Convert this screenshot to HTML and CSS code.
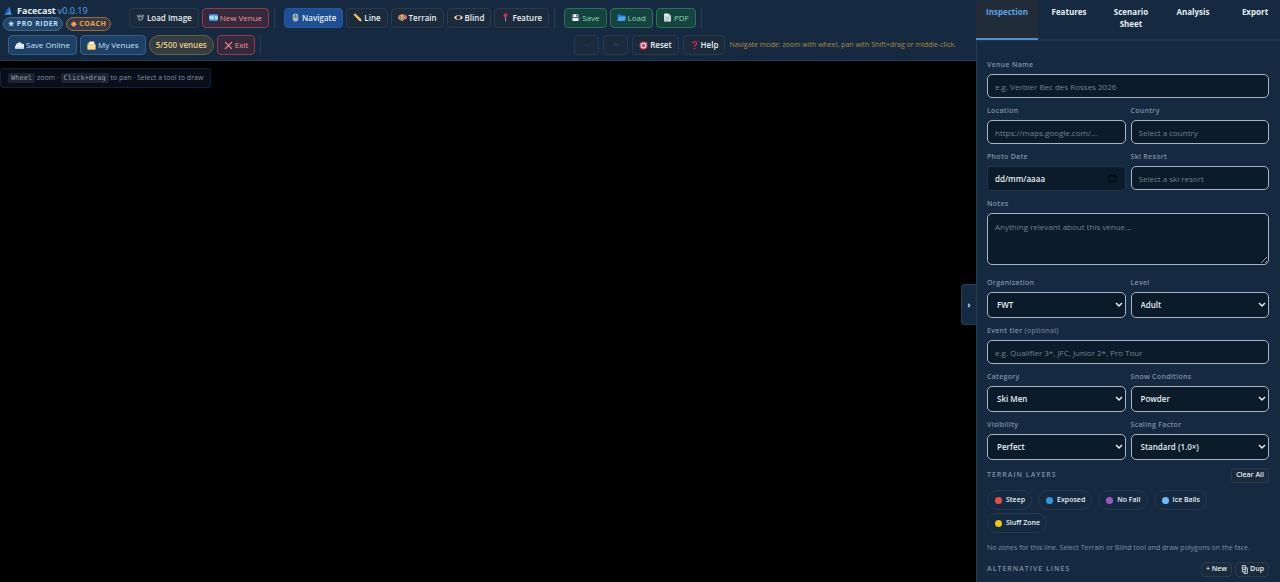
FILE: index.html
```html
<!DOCTYPE html>
<html lang="en">
<head>
    <meta charset="UTF-8">
    <meta name="viewport" content="width=device-width, initial-scale=1.0">
    <title>Facecast</title>
    <link rel="stylesheet" href="styles.css">
</head>
<body>
    <div class="app">
        <main class="workspace">
            <header class="toolbar">
                <div class="toolbar-row">
                    <div class="brand">
                        <div class="brand-name">
                            <svg class="logo" viewBox="0 0 16 16"><path d="M2 14 10 1l4 13-5-3z" fill="#2f9be8"/><path d="M2 14 10 1 9 11z" fill="#1763b5"/><path d="m2 14 7-3 5 3-5-1z" fill="#8fd0ff"/></svg>
                            <strong>Facecast</strong>
                            <span class="version">v0.0.19</span>
                        </div>
                        <div class="badges">
                            <span class="badge badge-pro">★ PRO RIDER</span>
                            <span class="badge badge-coach">◆ COACH</span>
                        </div>
                    </div>
                    <div class="group group-venue">
                        <button class="btn">
                            <svg class="icon" viewBox="0 0 16 16"><path d="m1 3 4 1 2-2 3 2 5-2-3 11-7 1z" fill="#60717f"/><path d="m3 4 4 5 6-5" fill="none" stroke="#b4c2cc"/><circle cx="8" cy="9" r="3" fill="#293743" stroke="#97a8b4"/></svg>
                            Load Image
                        </button>
                        <button class="btn btn-red">
                            <svg class="icon" viewBox="0 0 16 16"><rect y="2" width="16" height="12" rx="2" fill="#2d9be9"/><path d="M2 11V5l3 6V5m4 0H7v6h2M7 8h2m2-3 1 6 1-4 1 4 1-6" fill="none" stroke="#fff" stroke-width="1.3"/></svg>
                            New Venue
                        </button>
                    </div>
                    <div class="group group-tools">
                        <button class="btn btn-active">
                            <svg class="icon" viewBox="0 0 16 16"><rect x="3" y="1" width="10" height="14" rx="5" fill="#a9b7c2"/><path d="M3 7h10M8 1v6" stroke="#5a6b79"/><rect x="7" y="3" width="2" height="4" rx="1" fill="#596875"/></svg>
                            Navigate
                        </button>
                        <button class="btn">
                            <svg class="icon" viewBox="0 0 16 16"><path d="m1 3 3-2 10 9 1 5-5-2z" fill="#f5c73d"/><path d="m1 3 3-2 2 2-3 2z" fill="#f29393"/><path d="m14 10 1 5-5-2z" fill="#f1d8b0"/></svg>
                            Line
                        </button>
                        <button class="btn">
                            <svg class="icon" viewBox="0 0 16 16"><path d="M8 2c5 0 8 3 8 6s-3 3-5 3 0 4-4 3-7-3-7-6 3-6 8-6z" fill="#d98d67"/><circle cx="4" cy="7" r="1.5" fill="#3f85cf"/><circle cx="7" cy="5" r="1.5" fill="#efe07a"/><circle cx="11" cy="5" r="1.5" fill="#cf3d43"/><circle cx="5" cy="11" r="1.5" fill="#5eae57"/><circle cx="13" cy="8" r="1" fill="#75458b"/></svg>
                            Terrain
                        </button>
                        <button class="btn">
                            <svg class="icon" viewBox="0 0 16 16"><path d="M0 8c4-6 12-6 16 0-4 6-12 6-16 0z" fill="#f2efe6"/><circle cx="8" cy="8" r="4" fill="#54402f"/><circle cx="8" cy="8" r="2" fill="#101010"/></svg>
                            Blind
                        </button>
                        <button class="btn">
                            <svg class="icon" viewBox="0 0 16 16"><path d="M8 6v9" stroke="#9ba8b2" stroke-width="1.5"/><circle cx="8" cy="4" r="3.5" fill="#dc2748"/></svg>
                            Feature
                        </button>
                    </div>
                    <div class="group group-files">
                        <button class="btn btn-green">
                            <svg class="icon" viewBox="0 0 16 16"><path d="M1 2h12l2 2v10H1z" fill="#53687a"/><path d="M4 2h8v5H4zM3 9h10v5H3z" fill="#f1f4f6"/><path d="M9 3h2v3H9z" fill="#32485b"/></svg>
                            Save
                        </button>
                        <button class="btn btn-green">
                            <svg class="icon" viewBox="0 0 16 16"><path d="M1 2h5l2 2h6v10H1z" fill="#1873bd"/><path d="M3 6h13l-2 8H1z" fill="#42a5ee"/></svg>
                            Load
                        </button>
                        <button class="btn btn-green">
                            <svg class="icon" viewBox="0 0 16 16"><path d="M2 1h8l4 4v10H2z" fill="#e8edf0"/><path d="M10 1v4h4M4 7h8M4 9h8M4 11h8M4 13h5" fill="none" stroke="#8597a2"/></svg>
                            PDF
                        </button>
                    </div>
                </div>
                <div class="toolbar-row toolbar-row-second">
                    <div class="group group-online">
                        <button class="btn btn-blue">
                            <svg class="icon" viewBox="0 0 16 16"><path d="M3 14a3 3 0 0 1-1-6 3 3 0 0 1 3-4 4 4 0 0 1 7 1 4 4 0 0 1 2 9z" fill="#e6edf2"/><path d="M3 14a3 3 0 0 1-2-4c3 2 9 2 14 0 0 2-1 4-2 4z" fill="#b9cbd8"/></svg>
                            Save Online
                        </button>
                        <button class="btn btn-blue">
                            <svg class="icon" viewBox="0 0 16 16"><path d="M1 3h5l1 2h8v10H1z" fill="#e2b84f"/><path d="M4 1h9v5H4z" fill="#f3f3ed"/><path d="M1 7h14v8H1z" fill="#fbdc8b"/></svg>
                            My Venues
                        </button>
                        <span class="venue-count">5/500 venues</span>
                        <button class="btn btn-red">
                            <svg class="icon" viewBox="0 0 16 16"><path d="m2 2 12 12M14 2 2 14" stroke="#ff8f91" stroke-width="2"/></svg>
                            Exit
                        </button>
                    </div>
                    <div class="group group-view">
                        <button class="btn btn-zoom" disabled>−</button>
                        <button class="btn btn-zoom" disabled>+</button>
                        <button class="btn">
                            <svg class="icon" viewBox="0 0 16 16"><circle cx="8" cy="8" r="7" fill="#e8405a"/><circle cx="8" cy="8" r="5" fill="#f5e6e9"/><circle cx="8" cy="8" r="3" fill="#df304d"/><path d="m8 8 5-6 2 1-2 2z" fill="#69b9e5"/></svg>
                            Reset
                        </button>
                        <button class="btn">
                            <svg class="icon" viewBox="0 0 16 16"><path d="M5 5c0-5 7-5 7-1 0 3-4 3-4 6" fill="none" stroke="#d5234f" stroke-width="2.5"/><circle cx="8" cy="13.5" r="1.6" fill="#d5234f"/></svg>
                            Help
                        </button>
                        <span class="mode-hint">Navigate mode: zoom with wheel, pan with Shift+drag or middle-click.</span>
                    </div>
                </div>
            </header>
            <section class="canvas-area">
                <div class="canvas-hint"><kbd>Wheel</kbd> zoom · <kbd>Click+drag</kbd> to pan · Select a tool to draw</div>
                <button class="panel-toggle" aria-label="Collapse panel">›</button>
            </section>
        </main>

        <aside class="panel">
            <nav class="tabs">
                <button class="tab tab-active">Inspection</button>
                <button class="tab">Features</button>
                <button class="tab">Scenario Sheet</button>
                <button class="tab">Analysis</button>
                <button class="tab">Export</button>
            </nav>
            <form class="panel-body">
                <div class="field">
                    <label for="venue-name">Venue Name</label>
                    <input type="text" id="venue-name" placeholder="e.g. Verbier Bec des Rosses 2026">
                </div>
                <div class="field-row">
                    <div class="field">
                        <label for="location">Location</label>
                        <input type="text" id="location" placeholder="https://maps.google.com/...">
                    </div>
                    <div class="field">
                        <label for="country">Country</label>
                        <input type="text" id="country" placeholder="Select a country">
                    </div>
                </div>
                <div class="field-row">
                    <div class="field">
                        <label for="photo-date">Photo Date</label>
                        <div class="date-box">
                            <input type="text" id="photo-date" placeholder="dd/mm/aaaa">
                            <svg class="icon" viewBox="0 0 16 16"><path d="M2 3h12v11H2zM2 4h12M5 1v2m6-2v2" fill="none" stroke="#03080d" stroke-width="2"/></svg>
                        </div>
                    </div>
                    <div class="field">
                        <label for="resort">Ski Resort</label>
                        <input type="text" id="resort" placeholder="Select a ski resort">
                    </div>
                </div>
                <div class="field field-notes">
                    <label for="notes">Notes</label>
                    <textarea id="notes" placeholder="Anything relevant about this venue..."></textarea>
                </div>
                <div class="field-row">
                    <div class="field">
                        <label for="organization">Organization</label>
                        <select id="organization"><option>FWT</option></select>
                    </div>
                    <div class="field">
                        <label for="level">Level</label>
                        <select id="level"><option>Adult</option></select>
                    </div>
                </div>
                <div class="field">
                    <label for="tier">Event tier <span class="optional">(optional)</span></label>
                    <input type="text" id="tier" placeholder="e.g. Qualifier 3*, JFC, Junior 2*, Pro Tour">
                </div>
                <div class="field-row">
                    <div class="field">
                        <label for="category">Category</label>
                        <select id="category"><option>Ski Men</option></select>
                    </div>
                    <div class="field">
                        <label for="snow">Snow Conditions</label>
                        <select id="snow"><option>Powder</option></select>
                    </div>
                </div>
                <div class="field-row">
                    <div class="field">
                        <label for="visibility">Visibility</label>
                        <select id="visibility"><option>Perfect</option></select>
                    </div>
                    <div class="field">
                        <label for="scaling">Scaling Factor</label>
                        <select id="scaling"><option>Standard (1.0×)</option></select>
                    </div>
                </div>

                <div class="section-head">
                    <h2>Terrain Layers</h2>
                    <button type="button" class="btn-small">Clear All</button>
                </div>
                <div class="chips">
                    <button type="button" class="chip steep">Steep</button>
                    <button type="button" class="chip exposed">Exposed</button>
                    <button type="button" class="chip no-fall">No Fall</button>
                    <button type="button" class="chip ice">Ice Balls</button>
                    <button type="button" class="chip sluff">Sluff Zone</button>
                </div>
                <p class="empty-note">No zones for this line. Select Terrain or Blind tool and draw polygons on the face.</p>

                <div class="section-head">
                    <h2>Alternative Lines</h2>
                    <button type="button" class="btn-small">+ New</button>
                    <button type="button" class="btn-small">
                        <svg class="icon" viewBox="0 0 16 16"><path d="M4 1h6v11H4zM7 12v3h6V5h-3M5 5h4M5 8h4" fill="none" stroke="#e6edf3" stroke-width="1.5"/></svg>
                        Dup
                    </button>
                </div>
            </form>
        </aside>
    </div>
</body>
</html>
```
FILE: styles.css
```css
* {
    margin: 0;
    padding: 0;
    box-sizing: border-box;
}

body {
    background: #000;
    color: #e6edf3;
    font-family: 'Open Sans', 'Noto Sans', sans-serif;
    font-size: 8px;
    line-height: 12px;
    overflow: hidden;
}

button,
input,
select,
textarea {
    font: inherit;
    color: inherit;
}

button {
    cursor: pointer;
}

.app {
    display: flex;
    height: 100vh;
}

.workspace {
    flex: 1;
    min-width: 0;
    display: flex;
    flex-direction: column;
}

/* Toolbar */
.toolbar {
    display: flex;
    flex-direction: column;
    gap: 4px;
    padding: 4px 8px 5px 3px;
    background: #152a40;
    border-bottom: 1px solid #263c52;
}

.toolbar-row {
    display: flex;
    align-items: center;
    gap: 9px;
}

.toolbar-row-second {
    padding-left: 5px;
    padding-right: 12px;
}

.brand {
    width: 117px;
}

.brand-name {
    display: flex;
    align-items: center;
    gap: 4px;
    font-size: 9px;
    line-height: 13px;
}

.logo {
    width: 10px;
    height: 10px;
}

.version {
    color: #5aa5e6;
    margin-left: -2px;
}

.badges {
    display: flex;
    gap: 3px;
}

.badge {
    border: 1px solid #41678b;
    border-radius: 8px;
    padding: 0 4px;
    font-size: 7px;
    font-weight: 700;
    letter-spacing: 0.5px;
    background: #234669;
    color: #b9dcf9;
    white-space: nowrap;
}

.badge-coach {
    border-color: #986d43;
    background: #393b40;
    color: #eda45c;
}

.group {
    display: flex;
    align-items: center;
    gap: 3px;
    padding-right: 5px;
    border-right: 1px solid #263d55;
}

.btn {
    display: flex;
    align-items: center;
    justify-content: center;
    gap: 2px;
    height: 20px;
    padding: 0 6px;
    border: 1px solid #293b4e;
    border-radius: 4px;
    background: #1b2b3c;
    font-weight: 600;
    white-space: nowrap;
}

.icon {
    width: 9px;
    height: 9px;
    flex: none;
}

.btn-active {
    background: #1f4f93;
    border-color: #2458a0;
}

.btn-red,
.btn-green,
.btn-blue {
    font-weight: 500;
}

.btn-red {
    background: #352a3d;
    border-color: #963c48;
    color: #ff8f91;
}

.btn-green {
    background: #15433f;
    border-color: #2d7057;
    color: #88d9ad;
}

.btn-blue {
    background: #1d4164;
    border-color: #355f87;
    color: #c4e0f8;
}

.btn-zoom {
    width: 25px;
    color: #35485b;
}

.venue-count {
    border: 1px solid #666044;
    border-radius: 10px;
    padding: 3px 6px;
    background: #353d40;
    color: #e6cf85;
    font-weight: 600;
}

.group-view {
    gap: 4px;
    margin-left: auto;
    padding-right: 0;
    border-right: none;
}

.mode-hint {
    color: #b08a38;
    font-size: 7px;
    white-space: nowrap;
}

/* Canvas */
.canvas-area {
    position: relative;
    flex: 1;
    background: #000;
}

.canvas-hint {
    position: absolute;
    top: 7px;
    left: 0;
    padding: 3px 7px;
    border: 1px solid #142132;
    border-radius: 3px;
    background: #070f1a;
    color: #8391a0;
    font-size: 7px;
}

kbd {
    padding: 1px 3px;
    border-radius: 2px;
    background: #1b2430;
    color: #929dab;
    font-family: 'DejaVu Sans Mono', monospace;
    font-size: 7px;
}

.panel-toggle {
    position: absolute;
    top: 223px;
    right: 0;
    width: 15px;
    height: 41px;
    border: 1px solid #263d55;
    border-right: none;
    border-radius: 4px 0 0 4px;
    background: #152a40;
    font-weight: 700;
}

/* Side panel */
.panel {
    width: 304px;
    flex: none;
    overflow: hidden;
    background: #152a40;
    box-shadow: inset 1px 0 #263c52;
}

.tabs {
    display: flex;
    height: 41px;
    border-bottom: 2px solid #20364c;
}

.tab {
    flex: 1 0 62px;
    display: flex;
    justify-content: center;
    padding: 6px 8px;
    height: 40px;
    border: none;
    border-bottom: 2px solid transparent;
    background: none;
    font-weight: 700;
}

.tab-active {
    background: #222c39;
    border-bottom-color: #4a90d0;
    color: #5aa5e6;
}

.panel-body {
    display: flex;
    flex-direction: column;
    gap: 7px;
    padding: 18px 11px 0;
}

.field-row {
    display: grid;
    grid-template-columns: 1fr 1fr;
    gap: 5px;
}

.field {
    display: flex;
    flex-direction: column;
    gap: 3px;
    min-width: 0;
}

.field label {
    color: #7f91a4;
    font-size: 7px;
    font-weight: 600;
    letter-spacing: 0.3px;
}

.optional {
    font-weight: 400;
}

.field input,
.field select,
.field textarea {
    width: 100%;
    height: 24px;
    padding: 0 7px;
    border: 1px solid #a9b5c1;
    border-radius: 5px;
    background: #0c1b2a;
}

.field select {
    appearance: none;
    height: 26px;
    padding: 0 14px 0 9px;
    background: #0c1b2a url("data:image/svg+xml,%3Csvg xmlns='http://www.w3.org/2000/svg' viewBox='0 0 8 8'%3E%3Cpath d='m1 2 3 3 3-3' fill='none' stroke='%23e6edf3' stroke-width='1.5'/%3E%3C/svg%3E") no-repeat right 2px center / 8px;
    font-weight: 600;
}

.field textarea {
    display: block;
    height: 52px;
    padding: 7px;
}

.field-notes {
    margin-bottom: 5px;
}

.field ::placeholder {
    color: #75818b;
    opacity: 1;
}

.date-box {
    display: flex;
    align-items: center;
    padding-right: 8px;
    border: 1px solid #20344a;
    border-radius: 4px;
    background: #0c1b2a;
}

.field .date-box input {
    height: 23px;
    border: none;
    background: none;
    font-weight: 600;
}

.date-box input::placeholder {
    color: #e6edf3;
}

.section-head {
    display: flex;
    align-items: center;
    gap: 3px;
    height: 16px;
}

.section-head h2 {
    flex: 1;
    color: #7f91a4;
    font-size: 7px;
    font-weight: 600;
    letter-spacing: 1px;
    text-transform: uppercase;
}

.btn-small {
    display: flex;
    align-items: center;
    gap: 1px;
    height: 15px;
    padding: 0 4px;
    border: 1px solid #293b4e;
    border-radius: 4px;
    background: #1b2b3c;
    font-size: 7px;
    font-weight: 600;
}

.chips {
    display: flex;
    flex-wrap: wrap;
    gap: 3px 6px;
    margin-bottom: 2px;
}

.chip {
    display: flex;
    align-items: center;
    gap: 4px;
    height: 20px;
    padding: 0 6px 0 7px;
    border: 1px solid #24394f;
    border-radius: 10px;
    background: #152a40;
    font-size: 7px;
    font-weight: 600;
}

.chip::before {
    content: '';
    width: 7px;
    height: 7px;
    border-radius: 50%;
    background: #e4523f;
}

.exposed::before { background: #3498db; }
.no-fall::before { background: #9b59b6; }
.ice::before { background: #74b9ff; }
.sluff::before { background: #f1c40f; }

.empty-note {
    color: #7f91a4;
    font-size: 7px;
    white-space: nowrap;
}
```
